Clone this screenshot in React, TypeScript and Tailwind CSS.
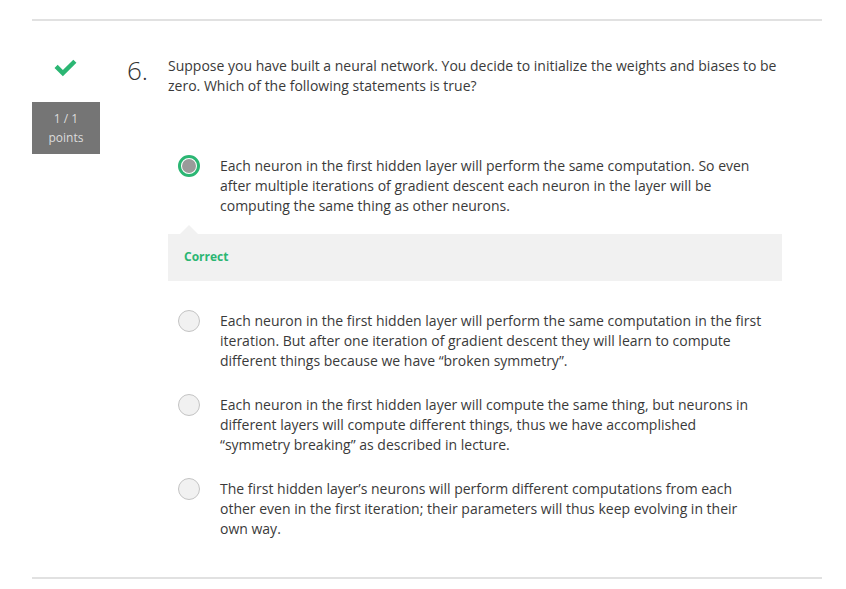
const options = [
  {
    text: 'Each neuron in the first hidden layer will perform the same computation. So even after multiple iterations of gradient descent each neuron in the layer will be computing the same thing as other neurons.',
    selected: true,
  },
  {
    text: 'Each neuron in the first hidden layer will perform the same computation in the first iteration. But after one iteration of gradient descent they will learn to compute different things because we have \u201cbroken symmetry\u201d.',
    selected: false,
  },
  {
    text: 'Each neuron in the first hidden layer will compute the same thing, but neurons in different layers will compute different things, thus we have accomplished \u201csymmetry breaking\u201d as described in lecture.',
    selected: false,
  },
  {
    text: 'The first hidden layer\u2019s neurons will perform different computations from each other even in the first iteration; their parameters will thus keep evolving in their own way.',
    selected: false,
  },
];

function Radio({ selected }: { selected: boolean }) {
  if (selected) {
    return (
      <div className="mt-[-1px] flex h-[22px] w-[22px] shrink-0 items-center justify-center rounded-full border-[3px] border-[#2bb673] bg-white">
        <div className="h-[14px] w-[14px] rounded-full bg-[#9a9a9a]" />
      </div>
    );
  }
  return <div className="mt-[-1px] h-[22px] w-[22px] shrink-0 rounded-full border border-[#c4c4c4] bg-[#f1f1f1]" />;
}

export default function App() {
  return (
    <div className="min-h-[589px] bg-white pt-[19px] font-['Open_Sans',sans-serif] text-[14px] leading-[20px] text-[#3a3a3a]">
      <div className="ml-[32px] w-[790px] border-y-2 border-[#e1e1e1] pb-[38px] pt-[35px]">
        <div className="flex">
          {/* score column */}
          <div className="flex w-[68px] shrink-0 flex-col items-center">
            <svg width="24" height="18" viewBox="0 0 23 17" className="mt-[3px]">
              <path d="M0.5 8.5 L3.5 5.5 L8.5 10.5 L18.5 0.5 L21.5 3.5 L8.5 16.5 Z" fill="#2bb673" />
            </svg>
            <div className="mt-[25px] flex h-[52px] w-[68px] flex-col items-center justify-center bg-[#757575] text-[12px] leading-[19px] text-[#dcdcdc]">
              <span>1 / 1</span>
              <span>points</span>
            </div>
          </div>

          <div className="ml-[27px] w-[41px] shrink-0 pt-[1px] text-[26px] font-light leading-[26px] text-[#333]">6.</div>

          {/* question */}
          <div className="w-[614px]">
            <p>
              Suppose you have built a neural network. You decide to initialize the weights and biases to be zero. Which of the following statements is true?
            </p>

            <div className="mt-[60px] flex flex-col">
              {options.map((opt, i) => (
                <div key={i} className={i === 1 ? 'mt-[30px]' : i > 1 ? 'mt-[24px]' : ''}>
                  <div className="flex gap-[20px] pl-[10px] pr-[20px]">
                    <Radio selected={opt.selected} />
                    <p>{opt.text}</p>
                  </div>
                  {opt.selected && (
                    <div className="relative mt-[18px] bg-[#f1f1f1] pb-[14px] pl-[16px] pt-[12px]">
                      <div className="absolute left-[12px] top-[-9px] h-0 w-0 border-x-[9px] border-b-[9px] border-x-transparent border-b-[#f1f1f1]" />
                      <span className="text-[12px] font-bold text-[#2bb673]">Correct</span>
                    </div>
                  )}
                </div>
              ))}
            </div>
          </div>
        </div>
      </div>
    </div>
  );
}
